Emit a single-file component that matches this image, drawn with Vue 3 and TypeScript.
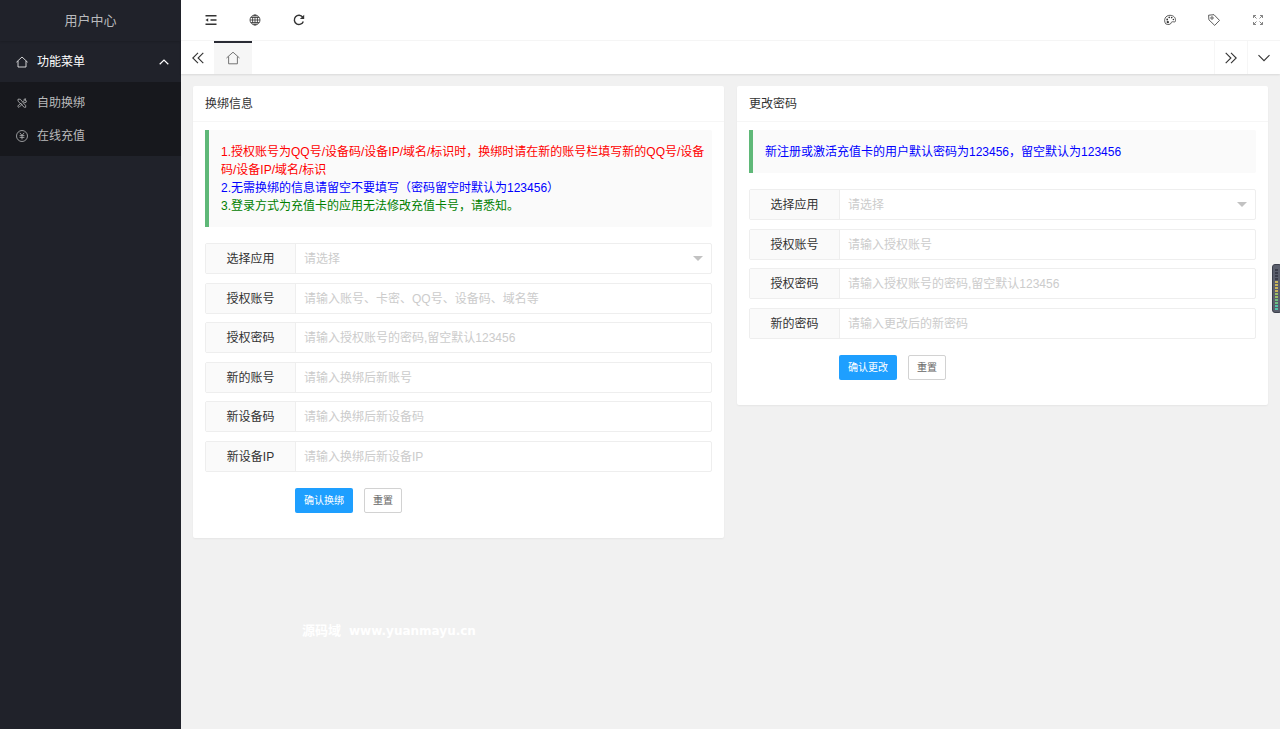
<script setup lang="ts">
import { reactive, ref } from 'vue'

interface Field {
  key: string
  label: string
  placeholder: string
  type: 'select' | 'text'
}

interface Notice {
  text: string
  tone: 'red' | 'blue' | 'green'
}

interface Panel {
  id: string
  title: string
  notices: Notice[]
  fields: Field[]
  submit: string
}

const panels: Panel[] = [
  {
    id: 'rebind',
    title: '换绑信息',
    notices: [
      { tone: 'red', text: '1.授权账号为QQ号/设备码/设备IP/域名/标识时，换绑时请在新的账号栏填写新的QQ号/设备码/设备IP/域名/标识' },
      { tone: 'blue', text: '2.无需换绑的信息请留空不要填写（密码留空时默认为123456）' },
      { tone: 'green', text: '3.登录方式为充值卡的应用无法修改充值卡号，请悉知。' },
    ],
    fields: [
      { key: 'app', label: '选择应用', placeholder: '请选择', type: 'select' },
      { key: 'account', label: '授权账号', placeholder: '请输入账号、卡密、QQ号、设备码、域名等', type: 'text' },
      { key: 'password', label: '授权密码', placeholder: '请输入授权账号的密码,留空默认123456', type: 'text' },
      { key: 'newAccount', label: '新的账号', placeholder: '请输入换绑后新账号', type: 'text' },
      { key: 'newDevice', label: '新设备码', placeholder: '请输入换绑后新设备码', type: 'text' },
      { key: 'newIp', label: '新设备IP', placeholder: '请输入换绑后新设备IP', type: 'text' },
    ],
    submit: '确认换绑',
  },
  {
    id: 'password',
    title: '更改密码',
    notices: [{ tone: 'blue', text: '新注册或激活充值卡的用户默认密码为123456，留空默认为123456' }],
    fields: [
      { key: 'app', label: '选择应用', placeholder: '请选择', type: 'select' },
      { key: 'account', label: '授权账号', placeholder: '请输入授权账号', type: 'text' },
      { key: 'password', label: '授权密码', placeholder: '请输入授权账号的密码,留空默认123456', type: 'text' },
      { key: 'newPassword', label: '新的密码', placeholder: '请输入更改后的新密码', type: 'text' },
    ],
    submit: '确认更改',
  },
]

const values = reactive<Record<string, string>>({})
for (const p of panels) for (const f of p.fields) values[`${p.id}-${f.key}`] = ''

function resetPanel(p: Panel) {
  for (const f of p.fields) values[`${p.id}-${f.key}`] = ''
}

const menuOpen = ref(true)
const meter = ['off', 'off', 'off', 'off', 'amber', 'amber', 'amber', 'amber', 'lime', 'lime', 'green', 'green', 'teal', 'teal']
</script>

<template>
  <div class="layout">
    <aside class="side">
      <div class="brand">用户中心</div>
      <nav>
        <button class="menu-head" type="button" :aria-expanded="menuOpen" @click="menuOpen = !menuOpen">
          <svg class="menu-icon" viewBox="0 0 12 12"><path d="M.4 6.200 6 1l5.600 5.200M2 5v6h8V5" /></svg>
          <span class="grow">功能菜单</span>
          <svg class="caret" viewBox="0 0 10 6"><path d="M.7 5.200 5 1l4.300 4.200" /></svg>
        </button>
        <div v-if="menuOpen" class="submenu">
          <a href="#rebind">
            <svg class="menu-icon" viewBox="0 0 12 12"><path d="M2 2.200h2.300L9.700 8.600v1.700H8.200L2 4.200zM1.600 9.200l3.200-3 1.200 1.200-3 3zM6.600 5.200 8 3.700V2.300l1.700-.5-.7 1.700 1.500.4-.6 1.600H8.400l-.8.700" /></svg>
            自助换绑
          </a>
          <a href="#recharge">
            <svg class="menu-icon" viewBox="0 0 12 12"><circle cx="6" cy="6" r="5.500" /><path d="M3.800 2.800 6 5.400l2.200-2.600M6 5.400v4M3.600 5.600h4.800M3.600 7.400h4.800" /></svg>
            在线充值
          </a>
        </div>
      </nav>
    </aside>

    <div class="main">
      <header class="top">
        <div class="tools">
          <button type="button" aria-label="收起菜单">
            <svg viewBox="0 0 12 12"><path class="bold" d="M.5 1.700h11M5.500 6h6M.5 10.300h11" /><path class="solid" d="M.5 6 3.200 4.200v3.600z" /></svg>
          </button>
          <button type="button" aria-label="网站">
            <svg viewBox="0 0 12 12"><circle cx="6" cy="6" r="5" /><ellipse cx="6" cy="6" rx="2.500" ry="5" /><path d="M6 1v10M1 6h10M1.800 3.500h8.400M1.800 8.500h8.400" /></svg>
          </button>
          <button type="button" aria-label="刷新">
            <svg viewBox="0 0 12 12"><path class="bold" d="M10.300 7.400A4.600 4.600 0 1 1 9.700 3.200" /><path class="solid" d="M11.200.8v4.300H6.900z" /></svg>
          </button>
        </div>
        <div class="tools">
          <button type="button" aria-label="主题">
            <svg viewBox="0 0 12 12"><path d="M1.700 9.800C-.8 6 1.300 1.300 6 1.300c3.500 0 5.800 2.400 5.600 5.400-.1 1.400-1.400 1.300-2.300 1.100-1.200-.2-2 .2-2.200 1.200-.2 1.400-3.400 2.200-5.400.8z" /><circle class="solid" cx="3.200" cy="5.500" r=".9" /><circle class="solid" cx="5.200" cy="3.400" r=".8" /><circle class="solid" cx="7.700" cy="3.600" r=".8" /><circle class="solid" cx="9.400" cy="5.500" r=".8" /><circle class="solid" cx="3.800" cy="8.100" r="1.200" /></svg>
          </button>
          <button type="button" aria-label="标签">
            <svg viewBox="0 0 12 12"><path d="M.6 1.200 6 .7l5.500 5.700-4.800 5L.9 5.800z" /><circle cx="4" cy="4" r="1.200" /></svg>
          </button>
          <button class="faint" type="button" aria-label="全屏">
            <svg viewBox="0 0 12 12"><path d="M4.500 4.500 1.700 1.700M7.500 4.500l2.800-2.800M4.500 7.500l-2.800 2.800M7.500 7.500l2.800 2.800M1.500 4V1.500H4M8 1.500h2.500V4M1.500 8v2.500H4M10.500 8v2.500H8" /></svg>
          </button>
        </div>
      </header>

      <div class="tabs">
        <button class="tab-ctl" type="button" aria-label="向左">
          <svg viewBox="0 0 12 12"><path d="M6 .8.800 6 6 11.200M11.300.8 6.100 6l5.200 5.200" /></svg>
        </button>
        <button class="tab" type="button" aria-label="主页">
          <svg viewBox="0 0 14 14"><path d="M.5 7 7 1.200 13.500 7M2.600 5.500v7.300h8.800V5.500" /></svg>
        </button>
        <span class="grow"></span>
        <button class="tab-ctl edged" type="button" aria-label="向右">
          <svg viewBox="0 0 12 12"><path d="M.7.8 5.900 6 .7 11.200M6 .8 11.200 6 6 11.200" /></svg>
        </button>
        <button class="tab-ctl edged" type="button" aria-label="更多">
          <svg viewBox="0 0 12 12"><path d="M.5 3.200 6 8.700l5.500-5.500" /></svg>
        </button>
      </div>

      <main class="content">
        <section v-for="p in panels" :id="p.id" :key="p.id" class="card">
          <h2>{{ p.title }}</h2>
          <div class="card-body">
            <div class="notice">
              <p v-for="n in p.notices" :key="n.text" :class="n.tone">{{ n.text }}</p>
            </div>
            <form @submit.prevent>
              <div v-for="f in p.fields" :key="f.key" class="field">
                <label :for="`${p.id}-${f.key}`">{{ f.label }}</label>
                <div class="control">
                  <select v-if="f.type === 'select'" :id="`${p.id}-${f.key}`" v-model="values[`${p.id}-${f.key}`]">
                    <option value="">{{ f.placeholder }}</option>
                  </select>
                  <input v-else :id="`${p.id}-${f.key}`" v-model="values[`${p.id}-${f.key}`]" type="text" :placeholder="f.placeholder" />
                  <i v-if="f.type === 'select'" class="arrow"></i>
                </div>
              </div>
              <div class="actions">
                <button class="primary" type="submit">{{ p.submit }}</button>
                <button class="plain" type="button" @click="resetPanel(p)">重置</button>
              </div>
            </form>
          </div>
        </section>
      </main>
    </div>

    <div class="watermark"><span>源码域</span><span class="site">www.yuanmayu.cn</span></div>
    <div class="meter"><i v-for="(m, i) in meter" :key="i" :class="m"></i></div>
  </div>
</template>

<style>
body {
  margin: 0;
  background: #f1f1f1;
}
</style>

<style scoped>
* {
  box-sizing: border-box;
}
.layout {
  position: relative;
  display: flex;
  min-height: 100vh;
  overflow: hidden;
  background: #f1f1f1;
  color: #333;
  font: 12px/18px "Liberation Sans", "Noto Sans CJK SC", sans-serif;
}
button,
input,
select {
  margin: 0;
  padding: 0;
  border: 0;
  background: none;
  color: inherit;
  font: inherit;
}
svg {
  display: block;
  flex: none;
  width: 12px;
  height: 12px;
  fill: none;
  stroke: currentColor;
}
.solid {
  fill: currentColor;
  stroke: none;
}
.bold {
  stroke-width: 1.4;
}
.grow {
  flex: 1;
}

.side {
  flex: none;
  width: 181px;
  background: #20222a;
}
.brand {
  height: 41px;
  color: #b9babd;
  font-size: 13px;
  line-height: 41px;
  text-align: center;
  box-shadow: 0 1px 2px rgba(0, 0, 0, 0.15);
}
.menu-head {
  display: flex;
  align-items: center;
  width: 100%;
  height: 41px;
  padding: 0 12px 0 16px;
  color: #fff;
  text-align: left;
}
.menu-icon {
  margin-right: 9px;
  stroke-width: 0.8;
}
.caret {
  width: 10px;
  height: 6px;
  stroke-width: 1.2;
}
.submenu {
  padding: 4px 0;
  background: #17181d;
}
.submenu a {
  display: flex;
  align-items: center;
  height: 33px;
  padding-left: 16px;
  color: #b9babb;
  text-decoration: none;
}

.main {
  flex: 1;
  min-width: 0;
}
.top {
  display: flex;
  justify-content: space-between;
  height: 41px;
  padding-left: 8px;
  border-bottom: 1px solid #f6f6f6;
  background: #fff;
}
.tools {
  display: flex;
}
.tools button {
  display: grid;
  place-items: center;
  width: 44px;
}
.tools svg {
  stroke-width: 0.8;
}
.tools .faint {
  color: #666;
}
.tabs {
  display: flex;
  height: 33px;
  background: #fff;
  box-shadow: 0 1px 2px rgba(0, 0, 0, 0.1);
}
.tab-ctl,
.tab {
  display: grid;
  place-items: center;
  width: 33px;
}
.tab-ctl svg {
  stroke-width: 1.1;
}
.edged {
  border-left: 1px solid #f6f6f6;
}
.tab {
  width: 38px;
  padding-bottom: 2px;
  border-top: 2px solid #292b34;
  background: #f6f6f6;
  color: #666;
}
.tab svg {
  width: 14px;
  height: 14px;
  stroke-width: 0.9;
}

.content {
  display: grid;
  grid-template-columns: 1fr 1fr;
  align-items: start;
  gap: 13px;
  padding: 12px;
}
.card {
  border-radius: 2px;
  background: #fff;
  box-shadow: 0 1px 2px rgba(0, 0, 0, 0.05);
}
h2 {
  margin: 0;
  height: 36px;
  padding: 0 12px;
  border-bottom: 1px solid #f6f6f6;
  font-size: 12px;
  font-weight: 400;
  line-height: 36px;
}
.card-body {
  padding: 8px 12px 25px;
}
.notice {
  margin-bottom: 16px;
  padding: 13px 4px 12px 12px;
  border-left: 4px solid #5fb878;
  border-radius: 0 2px 2px 0;
  background: #fafafa;
}
.notice p {
  margin: 0;
}
.red {
  color: #f00;
}
.blue {
  color: #00f;
}
.green {
  color: #008000;
}
.field {
  display: flex;
  height: 31px;
  margin-bottom: 8px;
  border: 1px solid #eee;
  border-radius: 2px;
}
.field:nth-child(odd) {
  margin-bottom: 9px;
}
.field label {
  flex: none;
  width: 90px;
  border-right: 1px solid #eee;
  background: #fafafa;
  line-height: 30px;
  text-align: center;
}
.control {
  position: relative;
  flex: 1;
}
.control input,
.control select {
  display: block;
  width: 100%;
  height: 100%;
  padding: 0 8px;
  outline: none;
  appearance: none;
}
.control select,
.control input::placeholder {
  color: #ccc;
  opacity: 1;
}
.arrow {
  position: absolute;
  top: 12px;
  right: 8px;
  border: 5px solid transparent;
  border-top-color: #c2c2c2;
  border-bottom: 0;
  pointer-events: none;
}
.actions {
  display: flex;
  gap: 11px;
  padding: 8px 0 0 90px;
}
.actions button {
  height: 25px;
  padding: 1px 9px 0;
  border-radius: 2px;
  font-size: 10px;
}
.actions .primary {
  background: #1e9fff;
  color: #fff;
}
.actions .plain {
  padding: 1px 8px 0;
  border: 1px solid #d2d2d2;
  background: #fff;
  color: #666;
}

.watermark {
  position: absolute;
  top: 622px;
  left: 302px;
  display: flex;
  gap: 8px;
  color: #fff;
  font: bold 13px/18px "DejaVu Sans", "Noto Sans CJK SC", sans-serif;
  pointer-events: none;
}
.site {
  font-size: 12px;
}
.meter {
  position: absolute;
  top: 264px;
  right: -2px;
  display: flex;
  flex-direction: column;
  gap: 1px;
  width: 10px;
  height: 49px;
  padding: 4px 3px 0 2px;
  border: 1px solid #3c404c;
  border-radius: 3px;
  background: #5a5e6c;
}
.meter i {
  height: 2px;
}
.off {
  background: #3a3d4a;
}
.amber {
  background: #c8b45a;
}
.lime {
  background: #9cbf68;
}
.meter .green {
  background: #6fbf80;
}
.teal {
  background: #4fc3a8;
}
</style>
